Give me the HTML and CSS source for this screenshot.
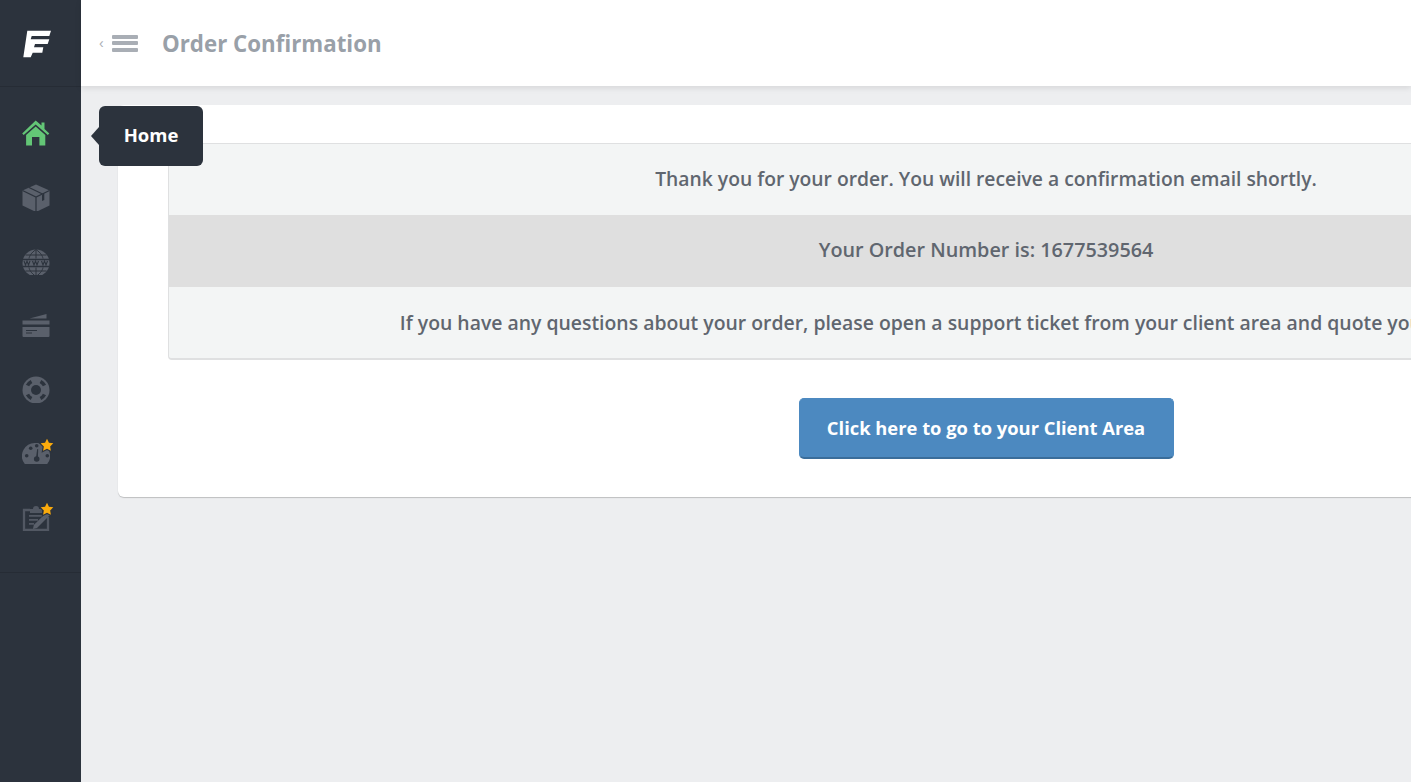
FILE: index.html
```html
<!DOCTYPE html>
<html lang="en">
<head>
<meta charset="utf-8">
<title>Order Confirmation</title>
<link rel="stylesheet" href="styles.css">
</head>
<body>
<div class="app">
  <aside class="sidebar">
    <div class="brand">
      <svg class="logo" width="28" height="28" viewBox="0 0 28 28"><path fill="#fff" d="M4.300.7H28L26.300 6H8.700L7.700 9.300H26.300L24.700 14H12L11 17.300H20.300L19.300 22.700H9.700L7.700 27.300H.3z"/></svg>
    </div>
    <nav class="nav">
      <a class="nav-item">
        <svg class="icon" width="28" height="28" viewBox="0 0 28 28"><path fill="#63c676" d="M13.700 1.500 19.500 6.500V3.500h3v6.600l4.800 4.300-1.500 1.700L13.700 5.400 1.700 16.100.2 14.400z"/><path fill="#63c676" d="M13.700 7.500 23.300 16v10.500h-5.900V18h-7.400v8.500H4.100V16z"/></svg>
      </a>
      <a class="nav-item">
        <svg class="icon" width="28" height="28" viewBox="0 -1 28 28"><path fill="#5a606b" d="M14 .5 27.500 6.500v15L14 28 .5 21.500v-15z"/><path fill="none" stroke="#2c333d" stroke-width="1.200" d="M.5 6.500 14 13l13.500-6.500M14 13v15M7 3.500 20.500 10"/><path fill="#2c333d" d="M20 10.500l2.300-1.100v6.500l-2.300 1z"/></svg>
      </a>
      <a class="nav-item">
        <svg class="icon" width="28" height="28" viewBox="0 -2 28 28"><circle cx="14" cy="14" r="13.500" fill="#5a606b"/><path fill="none" stroke="#2c333d" stroke-width="1" d="M14 .5v9M14 18.500v9M3.500 6h21M3.500 22h21M14 .5C9 4 7.500 7 7 9.500M14 .5c5 3.500 6.500 6.500 7 9M14 27.500c-5-3.500-6.500-6.500-7-9M14 27.500c5-3.500 6.500-6.500 7-9"/><path fill="none" stroke="#2c333d" stroke-width="1.500" d="M.5 10.500h27M.5 17.500h27"/><path fill="none" stroke="#2c333d" stroke-width="1.100" d="M2 12l1.500 4 1.500-4 1.500 4 1.500-4M10.500 12l1.500 4 1.500-4 1.500 4 1.500-4M19.500 12l1.500 4 1.500-4 1.500 4 1.500-4"/></svg>
      </a>
      <a class="nav-item">
        <svg class="icon" width="28" height="28" viewBox="0 -2 28 28"><path fill="#5a606b" d="M7.500 5.500 24.500 1v4.500zM.5 7.500h27v4H.5zM.5 14h27v9a1 1 0 0 1-1 1H1.500a1 1 0 0 1-1-1z"/><path fill="#2c333d" d="M4 17h11v1H4zM4 19.500h6v1H4z"/></svg>
      </a>
      <a class="nav-item">
        <svg class="icon" width="28" height="28" viewBox="0 -1 28 28"><circle cx="14" cy="14" r="13.500" fill="#5a606b"/><circle cx="14" cy="14" r="5" fill="#2c333d"/><g fill="none" stroke="#2c333d" stroke-width="3.600"><path d="M5.500 9.500A9.800 9.800 0 0 1 9.500 5.500"/><path d="M18.500 5.500a9.800 9.800 0 0 1 4 4"/><path d="M22.500 18.500a9.800 9.800 0 0 1-4 4"/><path d="M9.500 22.500a9.800 9.800 0 0 1-4-4"/></g></svg>
      </a>
      <a class="nav-item">
        <svg class="icon" width="28" height="28" viewBox="0 -.5 28 28"><path fill="#5a606b" d="M14 3.500A13 13 0 0 0 2.800 24.500H25.200A13 13 0 0 0 14 3.500z"/><g fill="#2c333d"><circle cx="8.700" cy="8.800" r="1.800"/><circle cx="14.700" cy="6.200" r="1.800"/><circle cx="4.700" cy="16.200" r="1.800"/><circle cx="25.300" cy="16.200" r="1.800"/><circle cx="14.700" cy="19.500" r="2.800"/><path d="M14 18l1.200-8.500 1 .2-.3 8.500z"/></g></svg>
        <svg class="star" width="16" height="16" viewBox="-2 -2 28 28"><path class="star-shape" d="M12 1l3.400 7 7.600 1.100-5.500 5.400 1.300 7.600L12 18.500l-6.800 3.600 1.300-7.600L1 9.100 8.600 8z"/></svg>
      </a>
      <a class="nav-item">
        <svg class="icon" width="28" height="28" viewBox="0 0 28 28"><path fill="none" stroke="#525863" stroke-width="2.300" d="M8 7H2v20h24V14"/><path fill="#525863" d="M8 6h3a3 3 0 0 1 6 0h3v4H8zM7 12h13v1.800H7zM7 16h9v1.800H7zM7 20h5v1.800H7z"/><path fill="#5a606b" d="M11 26l.8-4L25 9l3 3-13 13z"/></svg>
        <svg class="star" width="16" height="16" viewBox="-2 -2 28 28"><path class="star-shape" d="M12 1l3.400 7 7.600 1.100-5.500 5.400 1.300 7.600L12 18.500l-6.800 3.600 1.300-7.600L1 9.100 8.600 8z"/></svg>
      </a>
    </nav>
  </aside>
  <div class="tooltip">Home</div>
  <div class="main">
    <header class="topbar">
      <button class="toggle" type="button">
        <span class="chev">‹</span>
        <span class="bars"><i></i><i></i><i></i></span>
      </button>
      <h1 class="title">Order Confirmation</h1>
    </header>
    <main class="content">
      <section class="panel">
        <div class="info">
          <div class="row">Thank you for your order. You will receive a confirmation email shortly.</div>
          <div class="row row-dark">Your Order Number is: 1677539564</div>
          <div class="row row-long">If you have any questions about your order, please open a support ticket from your client area and quote your order number.</div>
        </div>
        <div class="actions"><a class="btn">Click here to go to your Client Area</a></div>
      </section>
    </main>
  </div>
</div>
</body>
</html>
```
FILE: styles.css
```css
* { box-sizing: border-box; }
html, body { margin: 0; height: 100%; overflow: hidden; }
body { font-family: "Open Sans", "Liberation Sans", sans-serif; background: #edeef0; color: #5f6570; }
.app { display: flex; height: 782px; width: 1411px; overflow: hidden; position: relative; }
.sidebar { width: 81px; flex: none; background: #2c333d; }
.brand { height: 87px; border-bottom: 1px solid #262c35; display: flex; align-items: center; justify-content: center; padding-right: 7px; padding-top: 1px; }
.logo { display: block; }
.nav { height: 486px; border-bottom: 1px solid #262c35; padding: 14px 0 0; }
.nav-item { height: 64px; display: flex; align-items: center; justify-content: center; position: relative; padding-right: 9px; }
.icon { display: block; }
.star { position: absolute; left: 39px; top: 16px; }
.star-shape { fill: #fbab0c; stroke: #2c333d; stroke-width: 4px; paint-order: stroke; }
.tooltip { position: absolute; left: 99px; top: 106px; width: 104px; height: 60px; padding-bottom: 3px; background: #2c333d; border-radius: 6px; color: #fff; font-size: 18.500px; font-weight: 700; display: flex; align-items: center; justify-content: center; z-index: 5; }
.tooltip::before { content: ""; position: absolute; left: -8px; top: 21px; border: 9px solid transparent; border-left: 0; border-right: 8px solid #2c333d; }
.main { flex: 1; min-width: 0; display: flex; flex-direction: column; }
.topbar { height: 86px; flex: none; background: #fff; display: flex; align-items: center; padding-left: 18px; box-shadow: 0 2px 6px rgba(0,0,0,.1); position: relative; }
.toggle { display: flex; align-items: center; gap: 8px; border: 0; background: none; padding: 0; width: 63px; }
.chev { color: #a9aeb5; font-size: 14px; line-height: 1; font-family: "Liberation Sans", sans-serif; }
.bars { display: flex; flex-direction: column; gap: 2.500px; width: 26px; }
.bars i { display: block; height: 4px; background: #a9aeb5; border-radius: 1px; }
.title { margin: 0; font-size: 22.300px; font-weight: 700; color: #99a0a8; }
.content { padding: 19px 0 0 37px; }
.panel { width: 1736px; height: 392px; background: #fff; border-radius: 6px; box-shadow: 0 1px 1px rgba(0,0,0,.2); padding: 38px 50px; }
.info { border: 1px solid #dfe0e1; border-bottom-width: 2px; border-radius: 4px; background: #f3f5f5; }
.row { height: 72px; padding-bottom: 2px; display: flex; align-items: center; justify-content: center; font-size: 19.300px; font-weight: 600; color: #60666f; white-space: nowrap; }
.row:first-child, .row:last-child { height: 71px; }
.row-dark { background: #dfdfdf; padding-bottom: 4px; font-size: 19.800px; }
.row-long { font-size: 19.400px; padding-bottom: 0; }
.actions { display: flex; justify-content: center; padding-top: 38px; }
.btn { width: 375px; height: 61px; padding-bottom: 2px; background: #4c89c0; border: 1px solid #4c89c0; border-bottom: 2px solid #3a6d9a; border-radius: 5px; color: #fff; font-size: 18.350px; font-weight: 700; display: flex; align-items: center; justify-content: center; }
```
